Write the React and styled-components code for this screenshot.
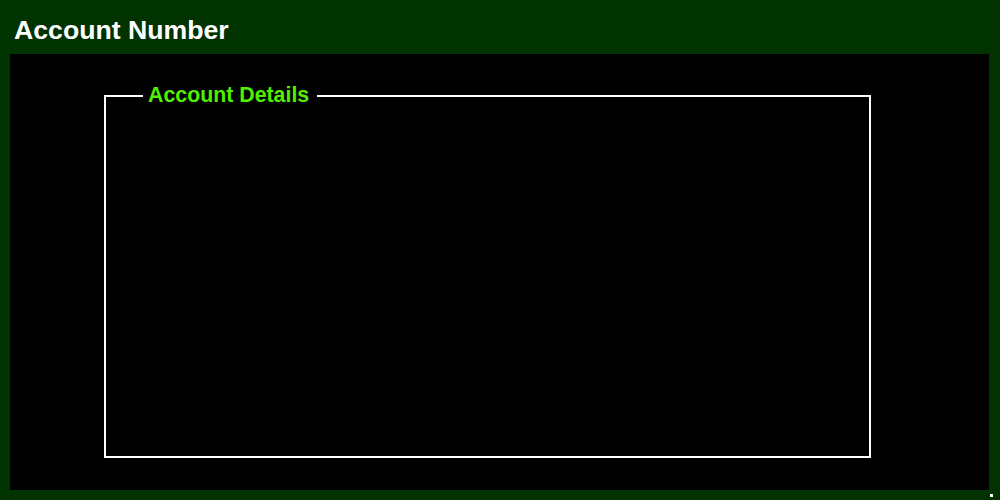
import React from "react";
import styled, { createGlobalStyle } from "styled-components";

const GlobalStyle = createGlobalStyle`
  html,
  body {
    margin: 0;
    padding: 0;
    background: #003300;
    font-family: "Liberation Sans", Arial, sans-serif;
    font-size: 13.333px;
  }
`;

function App() {
  return (
    <>
      <GlobalStyle />
      <Page>
        <Title>Account Number</Title>
        <Panel>
          <Details>
            <Legend>Account Details</Legend>
          </Details>
        </Panel>
        <Footer>
          <Grip />
        </Footer>
      </Page>
    </>
  );
}

const Page = styled.div`
  width: 1000px;
  height: 500px;
  display: flex;
  flex-direction: column;
  background: #003300;
`;

const Title = styled.h1`
  margin: 0;
  height: 54px;
  box-sizing: border-box;
  padding: 15px 0 0 14px;
  color: #ffffff;
  font-size: 2em;
  font-weight: bold;
  line-height: normal;
`;

const Panel = styled.div`
  flex: 1;
  margin: 0 11px 0 10px;
  background: #000000;
  padding: 29px 0 0 94px;
`;

const Details = styled.fieldset`
  margin: 0;
  width: 767px;
  height: 375px;
  box-sizing: border-box;
  border: 2px solid #ffffff;
  padding: 0 0 0 37px;
`;

const Legend = styled.legend`
  padding: 0 8px 0 5px;
  color: #50f000;
  font-size: 1.6em;
  font-weight: bold;
`;

const Footer = styled.div`
  height: 10px;
  display: flex;
  justify-content: flex-end;
  align-items: flex-start;
  padding: 4px 7px 0 0;
  box-sizing: border-box;
`;

const Grip = styled.div`
  width: 3px;
  height: 3px;
  background: #ffffff;
`;

export default App;
